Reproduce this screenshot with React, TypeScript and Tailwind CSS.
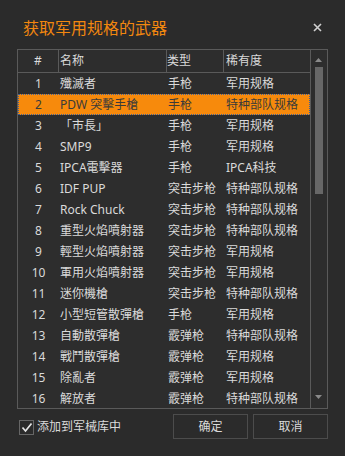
import React from "react";

type Weapon = { id: number; name: string; kind: string; rarity: string };

const weapons: Weapon[] = [
  { id: 1, name: "殲滅者", kind: "手枪", rarity: "军用规格" },
  { id: 2, name: "PDW 突擊手槍", kind: "手枪", rarity: "特种部队规格" },
  { id: 3, name: "「市長」", kind: "手枪", rarity: "军用规格" },
  { id: 4, name: "SMP9", kind: "手枪", rarity: "军用规格" },
  { id: 5, name: "IPCA電擊器", kind: "手枪", rarity: "IPCA科技" },
  { id: 6, name: "IDF PUP", kind: "突击步枪", rarity: "特种部队规格" },
  { id: 7, name: "Rock Chuck", kind: "突击步枪", rarity: "特种部队规格" },
  { id: 8, name: "重型火焰噴射器", kind: "突击步枪", rarity: "特种部队规格" },
  { id: 9, name: "輕型火焰噴射器", kind: "突击步枪", rarity: "军用规格" },
  { id: 10, name: "軍用火焰噴射器", kind: "突击步枪", rarity: "军用规格" },
  { id: 11, name: "迷你機槍", kind: "突击步枪", rarity: "特种部队规格" },
  { id: 12, name: "小型短管散彈槍", kind: "手枪", rarity: "军用规格" },
  { id: 13, name: "自動散彈槍", kind: "霰弹枪", rarity: "特种部队规格" },
  { id: 14, name: "戰鬥散彈槍", kind: "霰弹枪", rarity: "军用规格" },
  { id: 15, name: "除亂者", kind: "霰弹枪", rarity: "军用规格" },
  { id: 16, name: "解放者", kind: "霰弹枪", rarity: "特种部队规格" },
];

const selectedId = 2;

function Row({ w }: { w: Weapon }) {
  const selected = w.id === selectedId;
  return (
    <div
      className={
        selected
          ? "flex h-[21px] shrink-0 items-center bg-[#f78a0c] text-[#3a3a3a] outline-1 outline-dotted outline-[#3b5f9a] -outline-offset-1"
          : "flex h-[21px] shrink-0 items-center text-[#dadada]"
      }
    >
      <span className="w-[41px] text-center">{w.id}</span>
      <span className="w-[108px] pl-[1px] whitespace-nowrap">{w.name}</span>
      <span className="w-[57px] pl-[1px] whitespace-nowrap">{w.kind}</span>
      <span className="pl-[2px] whitespace-nowrap">{w.rarity}</span>
    </div>
  );
}

function Scrollbar() {
  return (
    <div className="flex w-[16px] flex-col items-center border-l border-[#5a5a5a]">
      <div className="flex h-[17px] items-end justify-center pb-[5px]">
        <svg width="7" height="4" viewBox="0 0 7 4">
          <path d="M0 4 L3.5 0 L7 4 Z" fill="#8a8a8a" />
        </svg>
      </div>
      <div className="h-[127px] w-[8px] bg-[#676767]" />
      <div className="flex-1" />
      <div className="flex h-[14px] items-start justify-center pt-[1px] pb-[9px]">
        <svg width="7" height="4" viewBox="0 0 7 4">
          <path d="M0 0 L7 0 L3.5 4 Z" fill="#8a8a8a" />
        </svg>
      </div>
    </div>
  );
}

export default function App() {
  return (
    <div
      className="flex h-[456px] w-[345px] flex-col bg-[#2b2b2b] px-[17px] text-[12px]"
      style={{ fontFamily: '"Noto Sans", "Noto Sans CJK SC", sans-serif' }}
    >
      <div className="flex h-[49px] shrink-0 items-center justify-between pt-[4px] pl-[6px] pr-[6px]">
        <h1
          className="text-[16px] leading-none text-[#f2870f]"
          style={{ fontFamily: '"Noto Sans CJK SC", sans-serif' }}
        >
          获取军用规格的武器
        </h1>
        <svg width="9" height="9" viewBox="0 0 9 9" className="mt-[1px]">
          <path d="M1 1 L8 8 M8 1 L1 8" stroke="#d0d0d0" strokeWidth="1.6" />
        </svg>
      </div>

      <div className="flex h-[360px] shrink-0 overflow-hidden border border-[#5a5a5a] bg-[#2d2d2d] leading-none">
        <div className="flex w-[292px] flex-col">
          <div className="flex h-[23px] shrink-0 items-center border-b border-[#5a5a5a] text-[#dadada]">
            <span className="flex h-full w-[41px] items-center justify-center border-r border-[#5a5a5a]">#</span>
            <span className="flex h-full w-[108px] items-center border-r border-[#5a5a5a] pl-[1px]">名称</span>
            <span className="flex h-full w-[57px] items-center border-r border-[#5a5a5a] pl-[0px]">类型</span>
            <span className="flex h-full items-center pl-[2px]">稀有度</span>
          </div>
          {weapons.map((w) => (
            <Row key={w.id} w={w} />
          ))}
        </div>
        <Scrollbar />
      </div>

      <div className="mt-[5px] flex h-[25px] shrink-0 items-center">
        <label className="flex flex-1 items-center gap-[3px] pl-[2px] pt-[1px] text-[#dadada]">
          <span className="flex h-[15px] w-[15px] items-center justify-center border border-[#666] bg-[#2b2b2b]">
            <svg width="12" height="11" viewBox="0 0 12 11">
              <path d="M1.5 5.5 L4.5 9 L10.5 1.5" fill="none" stroke="#e6e6e6" strokeWidth="1.7" />
            </svg>
          </span>
          添加到军械库中
        </label>
        <button className="h-[25px] w-[75px] border border-[#4c4c4c] text-[#dadada]">确定</button>
        <button className="ml-[5px] h-[25px] w-[75px] border border-[#4c4c4c] text-[#dadada]">取消</button>
      </div>
    </div>
  );
}
